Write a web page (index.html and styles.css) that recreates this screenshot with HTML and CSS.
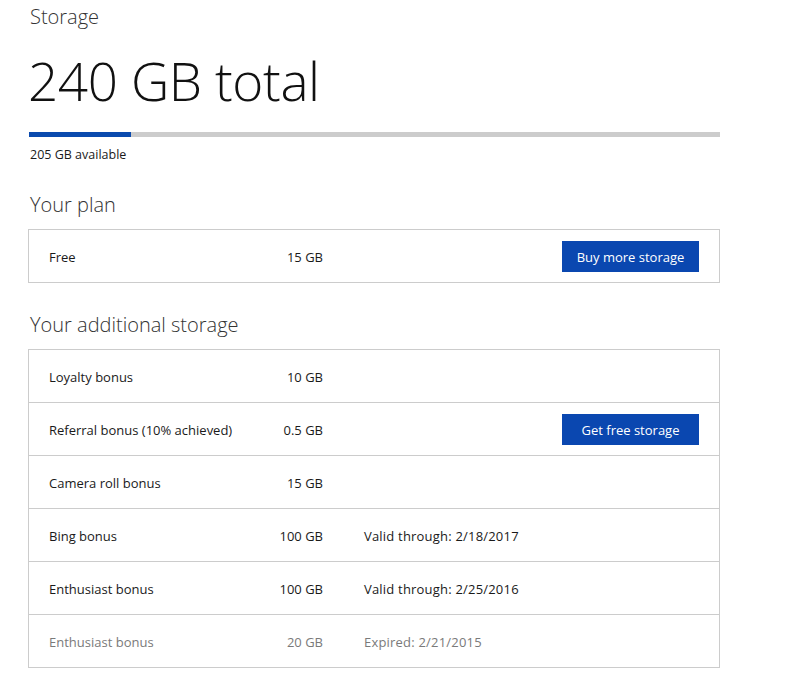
FILE: index.html
```html
<!DOCTYPE html>
<html>
<head>
<meta charset="utf-8">
<link rel="stylesheet" href="styles.css">
</head>
<body>
<div class="page">
  <h2 class="title">Storage</h2>
  <h1 class="total">240 GB total</h1>
  <div class="bar"><div class="bar-fill" style="width:14.8%"></div></div>
  <div class="avail">205 GB available</div>

  <h2 class="section">Your plan</h2>
  <div class="box">
    <div class="row">
      <span class="label">Free</span>
      <span class="size">15 GB</span>
      <span class="note"></span>
      <button class="btn">Buy more storage</button>
    </div>
  </div>

  <h2 class="section">Your additional storage</h2>
  <div class="box">
    <div class="row">
      <span class="label">Loyalty bonus</span>
      <span class="size">10 GB</span>
      <span class="note"></span>
    </div>
    <div class="row">
      <span class="label">Referral bonus (10% achieved)</span>
      <span class="size">0.5 GB</span>
      <span class="note"></span>
      <button class="btn">Get free storage</button>
    </div>
    <div class="row">
      <span class="label">Camera roll bonus</span>
      <span class="size">15 GB</span>
      <span class="note"></span>
    </div>
    <div class="row">
      <span class="label">Bing bonus</span>
      <span class="size">100 GB</span>
      <span class="note">Valid through: 2/18/2017</span>
    </div>
    <div class="row">
      <span class="label">Enthusiast bonus</span>
      <span class="size">100 GB</span>
      <span class="note">Valid through: 2/25/2016</span>
    </div>
    <div class="row expired">
      <span class="label">Enthusiast bonus</span>
      <span class="size">20 GB</span>
      <span class="note">Expired: 2/21/2015</span>
    </div>
  </div>
</div>
</body>
</html>
```

FILE: styles.css
```css
* { box-sizing: border-box; }
html, body { margin: 0; padding: 0; background: #fff; }
body {
  font-family: "Open Sans", "Noto Sans", sans-serif;
  color: #1a1a1a;
}
.page {
  width: 692px;
  margin-left: 28px;
  padding-top: 4px;
}
.title {
  margin: 0 0 0 2px;
  font-size: 20px;
  font-weight: 300;
  line-height: 26px;
  color: #333;
}
.total {
  margin: 16px 0 0 0;
  font-size: 53px;
  font-weight: 300;
  line-height: 70px;
  color: #111;
  letter-spacing: -0.4px;
}
.bar {
  margin: 16px 0 0 1px;
  height: 5px;
  background: #cccccc;
}
.bar-fill {
  height: 100%;
  background: #0a4aae;
}
.avail {
  margin: 9px 0 0 2px;
  font-size: 12.5px;
  line-height: 18px;
  color: #1a1a1a;
}
.section {
  margin: 28px 0 11px 2px;
  font-size: 20px;
  font-weight: 300;
  line-height: 26px;
  color: #333;
}
.box + .section {
  margin-top: 29px;
}
.box {
  border: 1px solid #cccccc;
}
.row {
  display: flex;
  align-items: center;
  height: 53px;
  padding: 1px 20px 0;
  border-top: 1px solid #cccccc;
  font-size: 13px;
  color: #1a1a1a;
}
.row:first-child {
  border-top: none;
  height: 52px;
}
.label { width: 200px; }
.size { width: 74px; text-align: right; }
.note { margin-left: 41px; flex: 1; letter-spacing: 0.2px; }
.btn {
  font-family: inherit;
  font-size: 13px;
  color: #fff;
  background: #0a47b0;
  border: none;
  height: 31px;
  width: 137px;
  padding: 0;
  cursor: pointer;
}
.expired { color: #7a7a7a; }
```
